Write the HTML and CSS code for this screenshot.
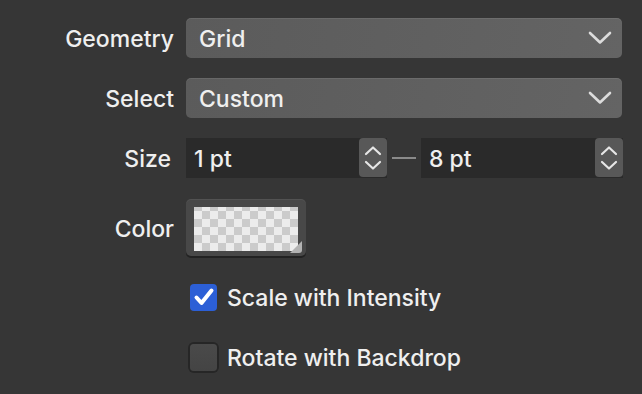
FILE: index.html
```html
<!DOCTYPE html>
<html lang="en">
<head>
    <meta charset="UTF-8">
    <title>Texture Settings</title>
    <link rel="stylesheet" href="styles.css">
</head>
<body>
    <div class="panel">
        <div class="row">
            <span class="label">Geometry</span>
            <div class="dropdown">
                <span class="text">Grid</span>
                <svg class="chevron" width="24" height="14" viewBox="0 0 24 14"><path d="M2 2 L12 11.5 L22 2" fill="none" stroke="#dcdcdc" stroke-width="2.6" stroke-linecap="round" stroke-linejoin="round"/></svg>
            </div>
        </div>
        <div class="row">
            <span class="label">Select</span>
            <div class="dropdown">
                <span class="text">Custom</span>
                <svg class="chevron" width="24" height="14" viewBox="0 0 24 14"><path d="M2 2 L12 11.5 L22 2" fill="none" stroke="#dcdcdc" stroke-width="2.6" stroke-linecap="round" stroke-linejoin="round"/></svg>
            </div>
        </div>
        <div class="row">
            <span class="label size-label">Size</span>
            <div class="range">
                <div class="number">
                    <span class="value text">1 pt</span>
                    <div class="stepper">
                        <svg width="18" height="26" viewBox="0 0 18 26"><path d="M2 9 L9 2.5 L16 9 M2 17 L9 23.5 L16 17" fill="none" stroke="#e6e6e6" stroke-width="2.2" stroke-linecap="round" stroke-linejoin="round"/></svg>
                    </div>
                </div>
                <div class="dash"></div>
                <div class="number">
                    <span class="value text">8 pt</span>
                    <div class="stepper">
                        <svg width="18" height="26" viewBox="0 0 18 26"><path d="M2 9 L9 2.5 L16 9 M2 17 L9 23.5 L16 17" fill="none" stroke="#e6e6e6" stroke-width="2.2" stroke-linecap="round" stroke-linejoin="round"/></svg>
                    </div>
                </div>
            </div>
        </div>
        <div class="row color-row">
            <span class="label">Color</span>
            <div class="well">
                <div class="swatch"></div>
                <div class="corner"></div>
            </div>
        </div>
        <div class="row">
            <span class="label"></span>
            <label class="check">
                <span class="box checked">
                    <svg width="22" height="20" viewBox="0 0 22 20"><path d="M3.5 10.5 L8.5 16 L18.5 3.5" fill="none" stroke="#fff" stroke-width="4" stroke-linecap="round" stroke-linejoin="round"/></svg>
                </span>
                <span class="text">Scale with Intensity</span>
            </label>
        </div>
        <div class="row">
            <span class="label"></span>
            <label class="check">
                <span class="box"></span>
                <span class="text">Rotate with Backdrop</span>
            </label>
        </div>
    </div>
</body>
</html>
```

FILE: styles.css
```css
body {
    margin: 0;
    background-color: #363636;
    color: #efefef;
    font-family: Inter, "Noto Sans", sans-serif;
    font-size: 23px;
    font-weight: 500;
}
.panel {
    display: flex;
    flex-direction: column;
    gap: 20px;
    padding: 18px 20px 0 0;
}
.row {
    display: flex;
    align-items: center;
    gap: 12px;
    height: 40px;
}
.label {
    width: 174px;
    flex: none;
    text-align: right;
    padding-top: 2px;
}
.text {
    padding-top: 2px;
}
.size-label {
    width: 171px;
    margin-right: 3px;
}
.dropdown {
    width: 436px;
    height: 40px;
    box-sizing: border-box;
    display: flex;
    align-items: center;
    justify-content: space-between;
    padding: 0 10px 0 13px;
    border-radius: 5px;
    background: linear-gradient(100deg, #5b5b5b, #646464);
    box-shadow: inset 0 1px 0 rgba(255, 255, 255, 0.08);
}
.range {
    display: flex;
    align-items: center;
}
.number {
    display: flex;
    align-items: center;
    height: 40px;
    background-color: #2a2a2a;
}
.number:first-child {
    width: 201px;
}
.number:last-child {
    width: 202px;
}
.value {
    flex: 1;
    padding-left: 8px;
}
.stepper {
    width: 28px;
    height: 39px;
    display: flex;
    align-items: center;
    justify-content: center;
    background-color: #585858;
    border-radius: 4px;
    margin-top: -1px;
}
.dash {
    width: 24px;
    height: 2px;
    margin: 0 5px;
    background-color: #8a8a8a;
}
.color-row {
    height: 59px;
}
.well {
    position: relative;
    width: 120px;
    height: 57px;
    box-sizing: border-box;
    padding: 8px;
    border-radius: 5px;
    background-color: #484848;
    box-shadow: 0 2px 0 #222, inset 0 1px 0 rgba(255, 255, 255, 0.06);
}
.swatch {
    width: 104px;
    height: 44px;
    background-color: #ececec;
    background-image: conic-gradient(#cbcbcb 25%, transparent 0 50%, #cbcbcb 0 75%, transparent 0);
    background-size: 16px 16px;
    background-position: 0 4px;
}
.corner {
    position: absolute;
    right: 4px;
    bottom: 3px;
    width: 0;
    height: 0;
    border-left: 12px solid transparent;
    border-bottom: 12px solid #b2b2b2;
    border-bottom-right-radius: 3px;
}
.check {
    display: flex;
    align-items: center;
    gap: 10px;
}
.box {
    width: 27px;
    height: 27px;
    margin-left: 4px;
    box-sizing: border-box;
    border-radius: 4px;
    display: flex;
    align-items: center;
    justify-content: center;
    background: linear-gradient(#4a4a4a, #444);
    box-shadow: 0 0 0 2px #262626;
}
.box.checked {
    background: #2c5fd6;
    box-shadow: none;
}
```
